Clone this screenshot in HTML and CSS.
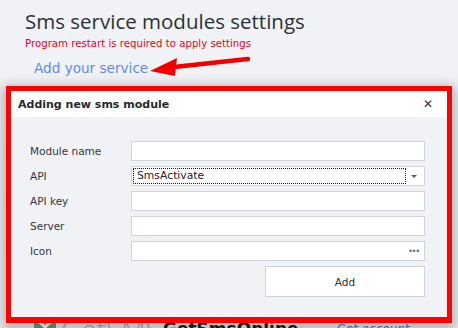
FILE: index.html
```html
<!DOCTYPE html>
<html lang="en-US">
<head>
    <meta charset="UTF-8">
    <title>Sms service modules settings</title>
    <link rel="stylesheet" href="styles.css">
</head>
<body>
    <div class="page">
        <h1 class="page-title">Sms service modules settings</h1>
        <p class="warning">Program restart is required to apply settings</p>
        <a class="add-link" href="#">Add your service</a>

        <div class="service-row">
            <span class="service-logo">
                <svg width="24" height="24" viewBox="0 0 24 24"><rect x="1" y="2" width="22" height="20" fill="#5aa37a"/><path d="M3 5 L12 13 L21 5" stroke="#fff" stroke-width="3" fill="none"/></svg>
                <span class="logo-text">GetSMS</span>
            </span>
            <span class="service-name">GetSmsOnline</span>
            <a class="service-link" href="#">Get account</a>
        </div>
    </div>

    <!-- annotation arrow pointing at the link -->
    <svg class="arrow" width="110" height="24" viewBox="0 0 110 24">
        <path d="M24 13 L98 5" stroke="#f20000" stroke-width="4.5" stroke-linecap="round"/>
        <polygon points="0,17 27,4 25,22" fill="#f20000"/>
    </svg>

    <div class="dialog">
        <div class="dialog-header">
            <span class="dialog-title">Adding new sms module</span>
            <span class="dialog-close">&#x2715;</span>
        </div>
        <div class="dialog-body">
            <div class="form">
                <label class="form-label">Module name</label>
                <div class="field"></div>

                <label class="form-label">API</label>
                <div class="field combo">
                    <span class="combo-value">SmsActivate</span>
                    <span class="combo-arrow"></span>
                </div>

                <label class="form-label">API key</label>
                <div class="field"></div>

                <label class="form-label">Server</label>
                <div class="field"></div>

                <label class="form-label">Icon</label>
                <div class="field browse"><span class="dots">&middot;&middot;&middot;</span></div>

                <span></span>
                <div class="form-actions">
                    <button class="add-btn">Add</button>
                </div>
            </div>
        </div>
    </div>
</body>
</html>
```

FILE: styles.css
```css
body {
    margin: 0;
    width: 458px;
    height: 328px;
    overflow: hidden;
    background: #f0f2f6;
    font-family: 'DejaVu Sans', Tahoma, Verdana, sans-serif;
    color: #2b2f36;
    position: relative;
}

.page {
    padding: 7px 0 0 25px;
}

.page-title {
    margin: 0;
    font-family: 'Open Sans', 'Segoe UI', sans-serif;
    font-weight: 400;
    font-size: 20.5px;
    line-height: 28px;
    color: #2b3038;
}

.warning {
    margin: 2px 0 0;
    font-size: 10.2px;
    line-height: 14px;
    color: #f00018;
}

.add-link {
    display: inline-block;
    margin: 7px 0 0 9px;
    font-size: 13.6px;
    line-height: 20px;
    color: #5b8cf2;
    text-decoration: none;
}

.service-row {
    display: flex;
    align-items: flex-start;
    margin-top: 236px;
    padding-left: 8px;
    height: 30px;
}

.service-logo {
    width: 130px;
    display: flex;
    align-items: flex-start;
    gap: 4px;
}

.logo-text {
    font-family: 'Open Sans', sans-serif;
    font-size: 28px;
    line-height: 30px;
    color: #a9b3c6;
    font-weight: 300;
}

.service-name {
    width: 174px;
    font-size: 17px;
    font-weight: 700;
    color: #222;
    line-height: 30px;
}

.service-link {
    font-size: 12px;
    color: #4f7ad8;
    text-decoration: none;
    line-height: 30px;
}

.arrow {
    position: absolute;
    left: 150px;
    top: 54px;
}

/* modal dialog, framed in red */
.dialog {
    position: absolute;
    left: 6px;
    top: 86px;
    width: 436px;
    height: 226px;
    border: 5px solid #ff0000;
    border-bottom-width: 6px;
    background: #f0f2f6;
    box-shadow: 0 4px 12px 4px rgba(0, 0, 0, 0.26);
    display: flex;
    flex-direction: column;
}

.dialog-header {
    height: 26px;
    background: #ffffff;
    display: flex;
    align-items: center;
    justify-content: space-between;
    padding: 0 14px 0 7px;
}

.dialog-title {
    font-weight: 700;
    font-size: 11px;
    color: #252a33;
}

.dialog-close {
    font-size: 12px;
    color: #30343c;
}

.dialog-body {
    flex: 1;
    padding: 24px 22px 0 19px;
}

.form {
    display: grid;
    grid-template-columns: 101px 1fr;
    grid-auto-rows: 20px;
    row-gap: 5px;
    align-items: center;
}

.form-label {
    font-size: 10.5px;
    color: #33373f;
}

.field {
    height: 20px;
    box-sizing: border-box;
    border: 1px solid #cfd3dc;
    background: #ffffff;
    position: relative;
}

.combo {
    display: flex;
    align-items: center;
}

.combo-value {
    flex: 1;
    margin: 0 18px 0 1px;
    height: 16px;
    box-sizing: border-box;
    border: 1px dotted #1c1c1c;
    font-size: 10.8px;
    line-height: 14px;
    padding-left: 3px;
    color: #1e2229;
}

.combo-arrow {
    position: absolute;
    right: 7px;
    top: 8px;
    border-left: 3px solid transparent;
    border-right: 3px solid transparent;
    border-top: 3px solid #555a63;
}

.browse {
    display: flex;
    align-items: center;
    justify-content: flex-end;
}

.dots {
    font-size: 12px;
    font-weight: 700;
    color: #666b74;
    letter-spacing: -1px;
    padding-right: 5px;
}

.form-actions {
    grid-column: 2;
    grid-row: span 2;
    display: flex;
    justify-content: flex-end;
    align-self: start;
}

.add-btn {
    width: 160px;
    height: 31px;
    border: 1px solid #cfd3dc;
    background: #ffffff;
    font-family: 'DejaVu Sans', Tahoma, sans-serif;
    font-size: 10.5px;
    color: #2b2f36;
    padding: 0;
}
```
